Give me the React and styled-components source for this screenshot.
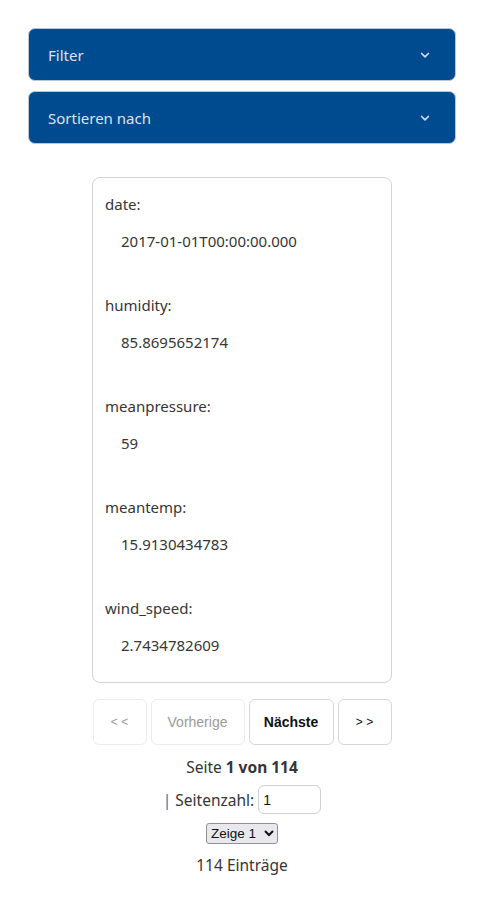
import React from 'react';
import styled, { createGlobalStyle } from 'styled-components';

const GlobalStyle = createGlobalStyle`
  body {
    margin: 0;
    background: #fff;
    font-family: "Noto Sans", "Open Sans", sans-serif;
    color: #363636;
  }
`;

const record = [
  ['date', '2017-01-01T00:00:00.000'],
  ['humidity', '85.8695652174'],
  ['meanpressure', '59'],
  ['meantemp', '15.9130434783'],
  ['wind_speed', '2.7434782609'],
];

const Chevron = () => (
  <svg width="12" height="12" viewBox="0 0 16 16" fill="none">
    <path d="M3.5 6l4.5 4.5L12.5 6" stroke="#d6dcea" strokeWidth="2.2" strokeLinecap="round" strokeLinejoin="round" />
  </svg>
);

const App = () => (
  <Page>
    <GlobalStyle />
    <Accordion>
      <AccordionButton>
        <span>Filter</span>
        <Chevron />
      </AccordionButton>
      <AccordionButton>
        <span>Sortieren nach</span>
        <Chevron />
      </AccordionButton>
    </Accordion>

    <Card>
      {record.map(([key, value]) => (
        <Field key={key}>
          <FieldLabel>{key}:</FieldLabel>
          <FieldValue>{value}</FieldValue>
        </Field>
      ))}
    </Card>

    <Pager>
      <PagerButton disabled width="54px" small>&lt; &lt;</PagerButton>
      <PagerButton disabled width="94px">Vorherige</PagerButton>
      <PagerButton bold width="85px">Nächste</PagerButton>
      <PagerButton width="54px" small>&gt; &gt;</PagerButton>
    </Pager>

    <InfoLine space="10px">
      Seite <strong>1 von 114</strong>
    </InfoLine>
    <InfoLine space="6px">
      <Bar>|</Bar> Seitenzahl: <PageInput type="number" defaultValue="1" />
    </InfoLine>
    <InfoLine space="9px">
      <SizeSelect defaultValue="1">
        <option value="1">Zeige 1</option>
        <option value="10">Zeige 10</option>
        <option value="20">Zeige 20</option>
      </SizeSelect>
    </InfoLine>
    <InfoLine space="9px">114 Einträge</InfoLine>
  </Page>
);

export default App;

const Page = styled.div`
  padding: 28px 24px 40px 28px;
  display: flex;
  flex-direction: column;
  align-items: center;
`;

const Accordion = styled.div`
  align-self: stretch;
  display: flex;
  flex-direction: column;
  gap: 10px;
`;

const AccordionButton = styled.button`
  height: 53px;
  display: flex;
  align-items: center;
  justify-content: space-between;
  padding: 0 24px 0 19px;
  background: #004b8f;
  color: #dde2ee;
  border: 1px solid #b9c6da;
  border-radius: 7px;
  font-family: "Noto Sans", "Open Sans", sans-serif;
  font-size: 15px;
  text-align: left;
  cursor: pointer;
`;

const Card = styled.div`
  margin-top: 33px;
  width: 300px;
  box-sizing: border-box;
  border: 1px solid #d3d3d8;
  border-radius: 8px;
  padding: 14px 12px 25px 12px;
  display: flex;
  flex-direction: column;
  gap: 40px;
`;

const Field = styled.div`
  display: flex;
  flex-direction: column;
  gap: 13px;
`;

const FieldLabel = styled.div`
  font-size: 15px;
  line-height: 24px;
`;

const FieldValue = styled.div`
  font-size: 15px;
  line-height: 24px;
  padding-left: 16px;
`;

const Pager = styled.div`
  margin-top: 16px;
  display: flex;
  gap: 4px;
`;

const PagerButton = styled.button`
  height: 46px;
  width: ${props => props.width};
  padding: 0;
  background: #fff;
  border: 1px solid ${props => (props.disabled ? '#ececee' : '#d6d6da')};
  border-radius: 6px;
  font-family: "Liberation Sans", Arial, sans-serif;
  font-size: ${props => (props.small ? '12px' : '14px')};
  font-weight: ${props => (props.bold ? 700 : 400)};
  color: ${props => (props.disabled ? '#9a9a9a' : '#111')};
`;

const InfoLine = styled.div`
  margin-top: ${props => props.space};
  font-size: 15.5px;
  line-height: 24px;
  display: flex;
  align-items: center;
  gap: 4px;
  strong {
    font-weight: 700;
  }
`;

const Bar = styled.span`
  color: #4a6aa8;
`;

const PageInput = styled.input`
  width: 63px;
  height: 29px;
  box-sizing: border-box;
  border: 1px solid #cfcfd4;
  border-radius: 6px;
  padding: 0 4px;
  font-family: "Liberation Sans", Arial, sans-serif;
  font-size: 14px;
  color: #111;
  -moz-appearance: textfield;
  &::-webkit-outer-spin-button,
  &::-webkit-inner-spin-button {
    -webkit-appearance: none;
    margin: 0;
  }
`;

const SizeSelect = styled.select`
  height: 21px;
  width: 72px;
  background-color: #e9e9ed;
  border: 1px solid #8f8f9d;
  border-radius: 3px;
  font-family: "Liberation Sans", Arial, sans-serif;
  font-size: 13.5px;
  color: #111;
`;
